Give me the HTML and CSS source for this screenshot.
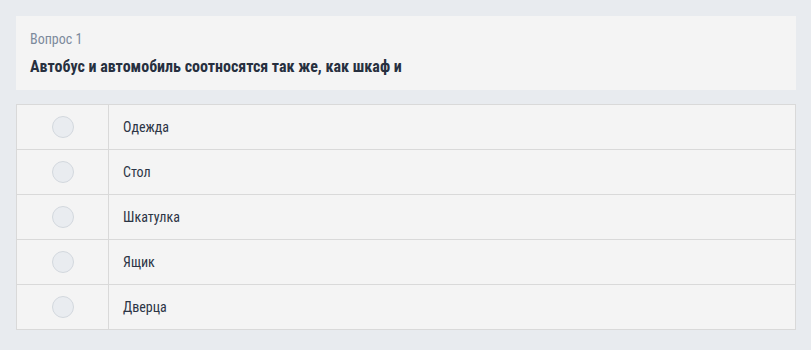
FILE: index.html
```html
<!DOCTYPE html>
<html lang="ru">
<head>
<meta charset="utf-8">
<link rel="stylesheet" href="styles.css">
</head>
<body>
<div class="page">
  <div class="question">
    <div class="qnum">Вопрос 1</div>
    <div class="qtext">Автобус и автомобиль соотносятся так же, как шкаф и</div>
  </div>
  <div class="answers">
    <label class="row"><span class="cell-radio"><span class="radio"></span></span><span class="cell-text">Одежда</span></label>
    <label class="row"><span class="cell-radio"><span class="radio"></span></span><span class="cell-text">Стол</span></label>
    <label class="row"><span class="cell-radio"><span class="radio"></span></span><span class="cell-text">Шкатулка</span></label>
    <label class="row"><span class="cell-radio"><span class="radio"></span></span><span class="cell-text">Ящик</span></label>
    <label class="row"><span class="cell-radio"><span class="radio"></span></span><span class="cell-text">Дверца</span></label>
  </div>
</div>
</body>
</html>
```

FILE: styles.css
```css
html, body {
  margin: 0;
  padding: 0;
  background: #e8ebef;
}
body {
  font-family: "Liberation Sans Narrow", "Roboto Condensed", Roboto, sans-serif;
}
.page {
  padding: 16px 15px 16px 16px;
  display: flex;
  flex-direction: column;
  gap: 14px;
}
.question {
  background: #f4f4f4;
  padding: 14px 14px 0 14px;
  height: 60px;
}
.qnum {
  font-size: 14px;
  color: #7c8a9c;
  line-height: 18px;
}
.qtext {
  margin-top: 9px;
  font-size: 16px;
  font-weight: bold;
  color: #27303f;
  line-height: 20px;
}
.answers {
  border: 1px solid #d9d9d9;
  background: #f4f4f4;
}
.row {
  display: flex;
  height: 44px;
  border-top: 1px solid #d9d9d9;
}
.row:first-child {
  border-top: none;
}
.cell-radio {
  width: 91px;
  border-right: 1px solid #d9d9d9;
  display: flex;
  align-items: center;
  justify-content: center;
}
.radio {
  width: 20px;
  height: 20px;
  border-radius: 50%;
  background: #e9ecf0;
  border: 1px solid #d3d8de;
}
.cell-text {
  display: flex;
  align-items: center;
  padding-left: 14px;
  font-size: 14px;
  color: #2c3545;
}
```
